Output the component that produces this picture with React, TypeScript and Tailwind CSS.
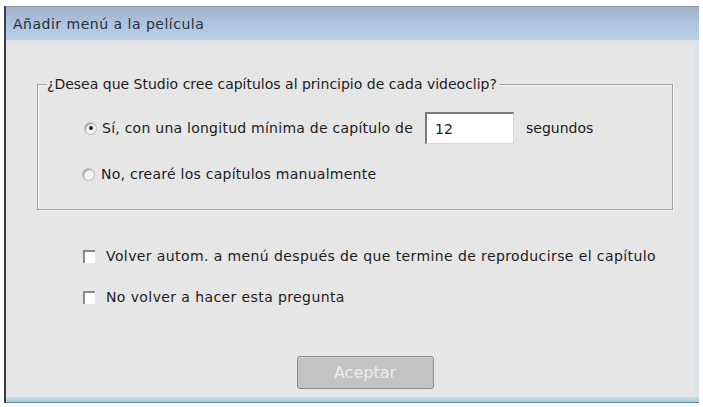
import React from "react";

export default function App() {
  const font = { fontFamily: '"DejaVu Sans", Verdana, sans-serif' };
  return (
    <div className="w-[703px] h-[407px] bg-white overflow-hidden" style={font}>
      <div className="mt-[6px] ml-[4px] w-[695px] h-[397px] flex flex-col border-l-[2px] border-[#3a3d42] bg-[#e6e6e6]">
        {/* title bar */}
        <div className="h-[34px] flex items-center pl-[7px] bg-gradient-to-b from-[#a2b2c8] via-[#aec3de] to-[#b9d0ec] border-t border-[#8e98a4]">
          <span className="text-[14px] leading-[18px] text-[#26303c] tracking-[0.5px]">Añadir menú a la película</span>
        </div>
        <div className="h-[3px] bg-[#dfe3e3]" />
        <div className="flex-1 flex flex-col border-r-[4px] border-[#d9e4ea] pl-[31px] pr-[22px] pt-[41px]">
          {/* group box */}
          <div className="relative h-[126px] border border-[#9fa1a3] shadow-[inset_1px_1px_0_#f6f6f6,1px_1px_0_#f6f6f6]">
            <span className="absolute left-[9px] top-[-10px] bg-[#e6e6e6] pr-[2px] text-[14px] leading-[18px] text-[#1c1c1c]">
              ¿Desea que Studio cree capítulos al principio de cada videoclip?
            </span>
            <div className="flex items-center pl-[46px] pt-[27px]">
              <span className="w-[13px] h-[13px] rounded-full bg-[#f4f4f4] border border-[#b8b8b8] flex items-center justify-center shadow-[inset_1px_1px_1px_#9a9a9a]">
                <span className="w-[4px] h-[4px] rounded-full bg-[#222]" />
              </span>
              <span className="ml-[5px] text-[14px] leading-[18px] tracking-[0.25px] text-[#1c1c1c]">Sí, con una longitud mínima de capítulo de</span>
              <div className="ml-[12px] w-[89px] h-[32px] bg-white border border-[#d8d8d8] border-t-[#7a7a7a] border-l-[#7a7a7a] border-t-[2px] border-l-[2px] flex items-center pl-[8px] text-[14px] leading-[18px] text-[#1c1c1c]">
                12
              </div>
              <span className="ml-[12px] text-[14px] leading-[18px] text-[#1c1c1c]">segundos</span>
            </div>
            <div className="flex items-center pl-[44px] pt-[21px]">
              <span className="w-[13px] h-[13px] rounded-full bg-[#f4f4f4] border border-[#b8b8b8] shadow-[inset_1px_1px_1px_#9a9a9a]" />
              <span className="ml-[6px] text-[14px] leading-[18px] tracking-[0.25px] text-[#1c1c1c]">No, crearé los capítulos manualmente</span>
            </div>
          </div>
          {/* checkboxes */}
          <div className="flex items-center pl-[46px] mt-[37px]">
            <span className="w-[12px] h-[13px] bg-white border-t-[2px] border-l-[2px] border-[#8a8a8a]" />
            <span className="ml-[11px] text-[14px] leading-[18px] tracking-[0.4px] text-[#1c1c1c]">Volver autom. a menú después de que termine de reproducirse el capítulo</span>
          </div>
          <div className="flex items-center pl-[46px] mt-[23px]">
            <span className="w-[12px] h-[13px] bg-white border-t-[2px] border-l-[2px] border-[#8a8a8a]" />
            <span className="ml-[11px] text-[14px] leading-[18px] tracking-[0.4px] text-[#1c1c1c]">No volver a hacer esta pregunta</span>
          </div>
          <div className="flex justify-center mt-[50px] pl-[20px]">
            <div className="w-[137px] h-[33px] rounded-[3px] bg-[#c3c3c3] border border-[#8a8a8a] flex items-center justify-center text-[16px] text-[#ededed] shadow-[inset_0_1px_0_#d6d6d6]">
              Aceptar
            </div>
          </div>
        </div>
        <div className="h-[6px] bg-gradient-to-b from-[#c6e1ea] to-[#9ecde0] border-b border-[#6f8fa0]" />
      </div>
    </div>
  );
}
